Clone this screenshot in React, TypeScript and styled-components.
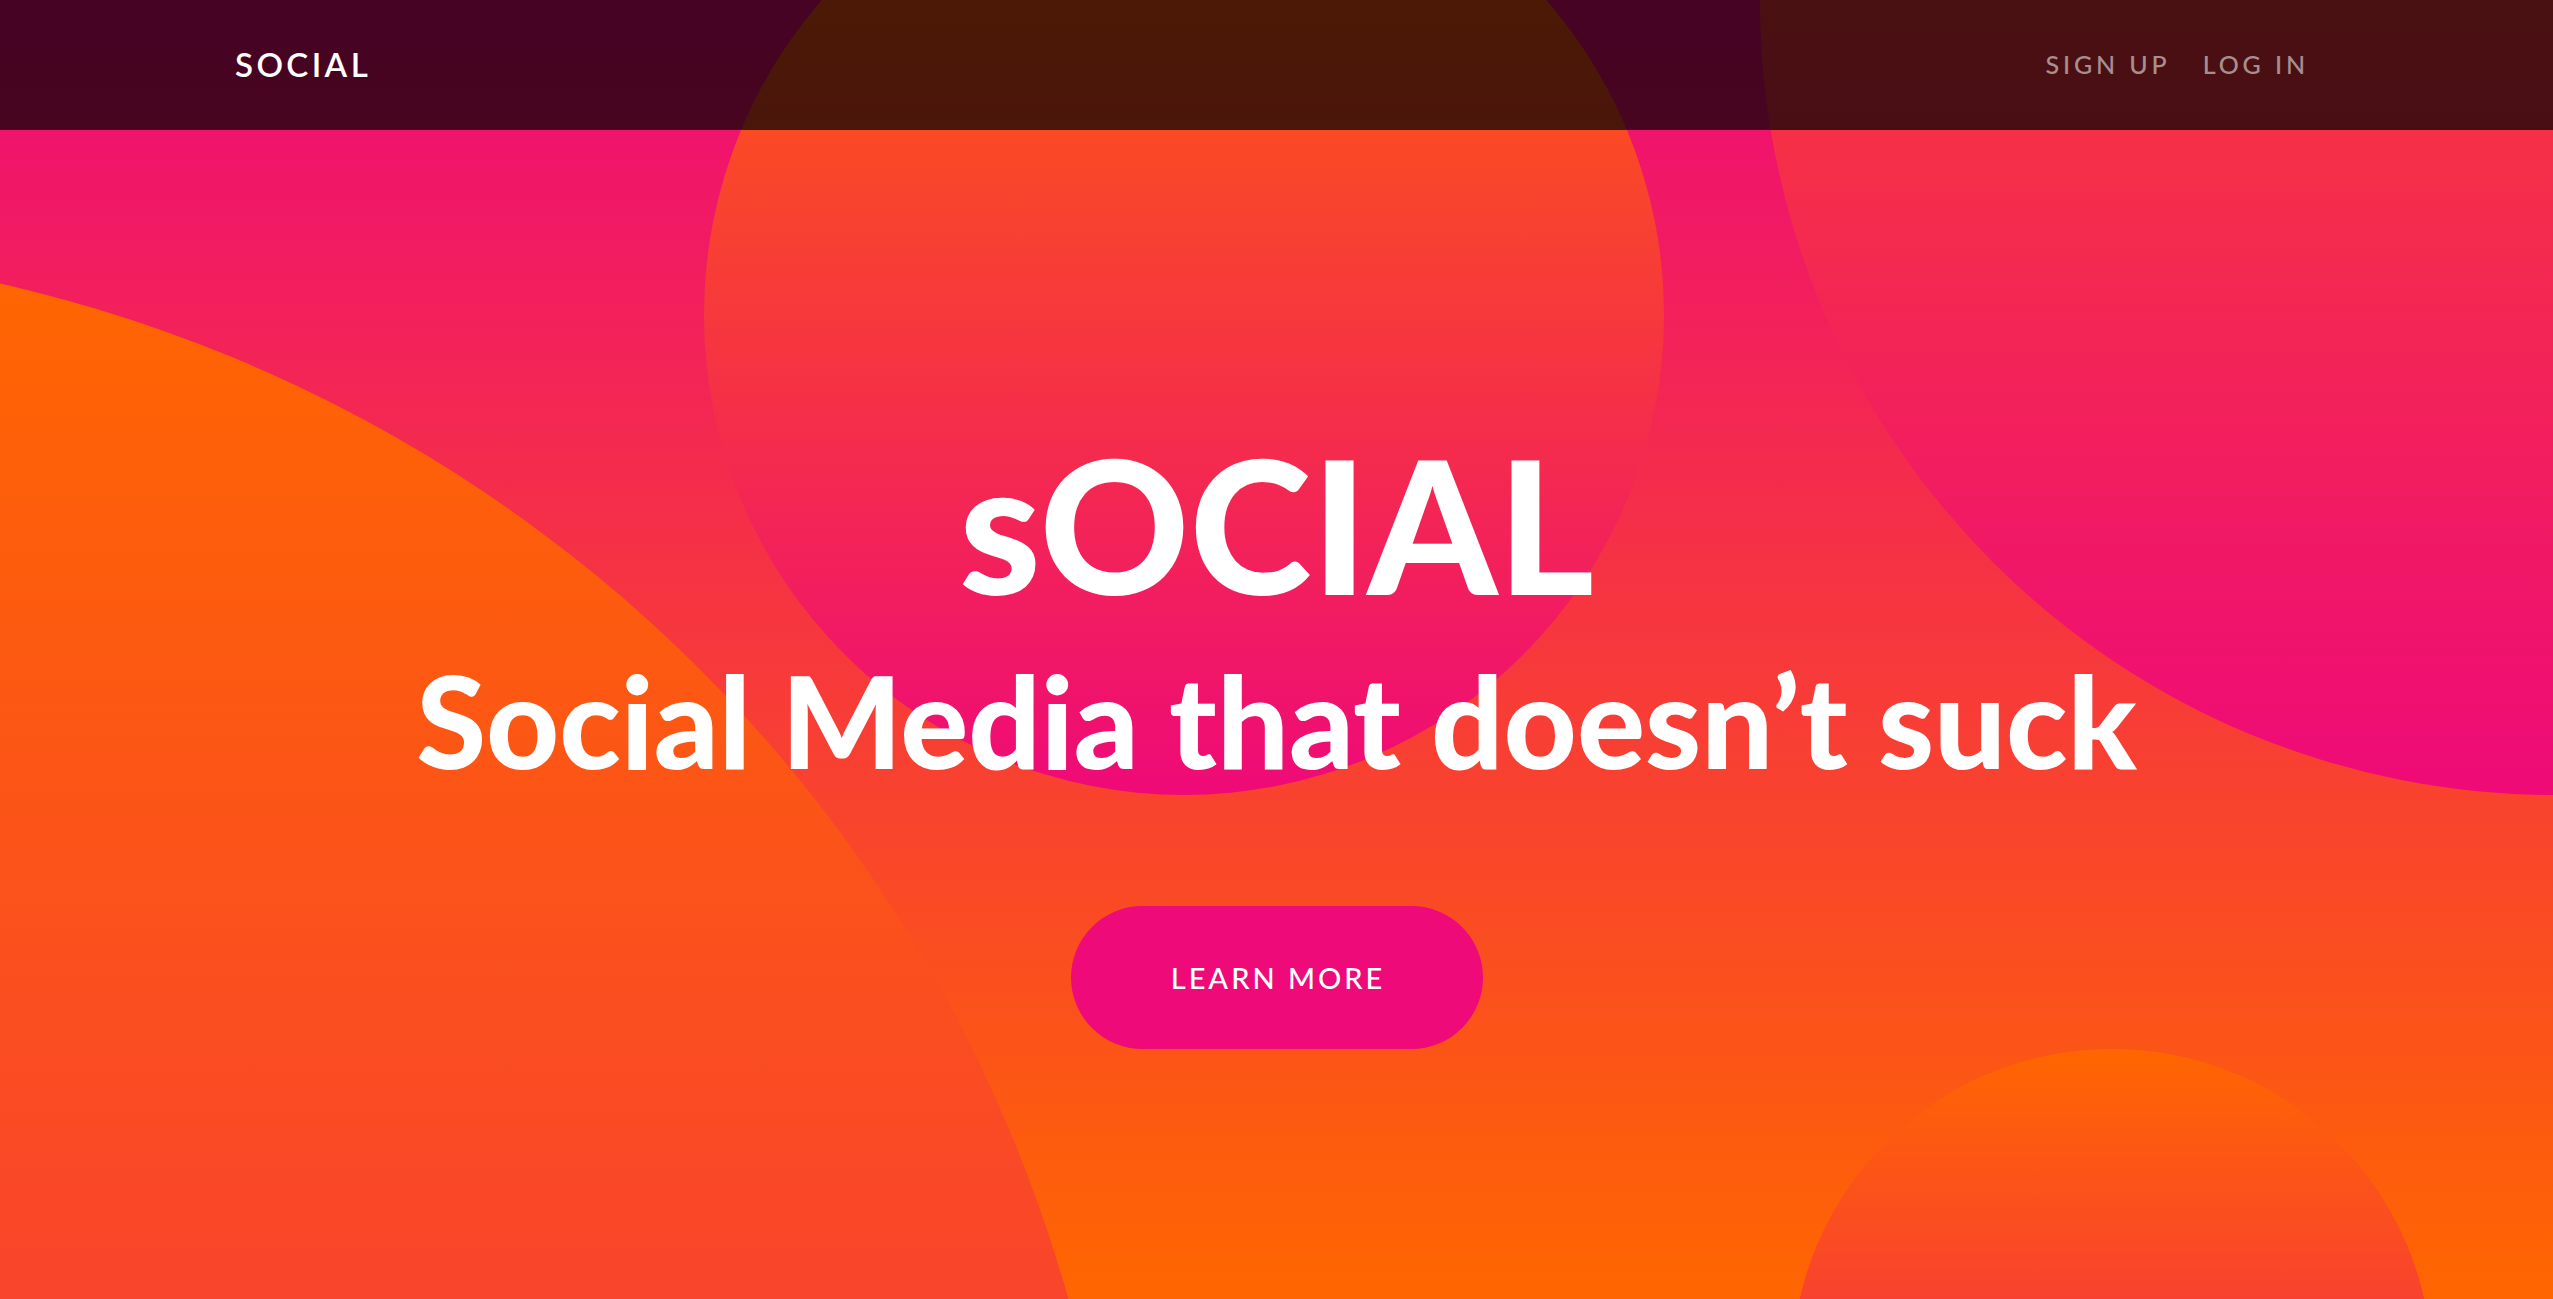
import React from "react";
import styled, { createGlobalStyle } from "styled-components";

const GlobalStyle = createGlobalStyle`
  html, body {
    margin: 0;
    padding: 0;
  }
  body {
    font-family: Lato, "Liberation Sans", sans-serif;
    -webkit-font-smoothing: antialiased;
  }
  *, *::before, *::after {
    box-sizing: border-box;
  }
`;

const Page = styled.div`
  position: relative;
  height: 100vh;
  min-height: 1299px;
  overflow: hidden;
  display: flex;
  flex-direction: column;
  background: linear-gradient(to bottom, #ee0a78 0%, #ff6600 100%);
`;

const Blob = styled.div<{ $cx: number; $cy: number; $r: number }>`
  position: absolute;
  left: ${(p) => p.$cx - p.$r}px;
  top: ${(p) => p.$cy - p.$r}px;
  width: ${(p) => p.$r * 2}px;
  height: ${(p) => p.$r * 2}px;
  border-radius: 50%;
  background: linear-gradient(to bottom, #ff6600 0%, #ee0a78 100%);
  pointer-events: none;
  z-index: 0;
`;

const NavBar = styled.header`
  position: relative;
  z-index: 2;
  flex: none;
  height: 130px;
  display: flex;
  align-items: center;
  justify-content: space-between;
  padding: 0 244px 2px 235px;
  background: rgba(0, 0, 0, 0.7);
`;

const Brand = styled.a`
  font-family: Lato, "Liberation Sans", sans-serif;
  font-weight: 600;
  font-size: 33px;
  line-height: 1;
  letter-spacing: 3.4px;
  color: #ffffff;
  text-decoration: none;
`;

const NavLinks = styled.nav`
  display: flex;
  align-items: center;
  gap: 32px;
`;

const NavLink = styled.a`
  font-family: Lato, "Liberation Sans", sans-serif;
  font-weight: 500;
  font-size: 25px;
  line-height: 1;
  letter-spacing: 3.9px;
  color: rgba(255, 255, 255, 0.55);
  text-decoration: none;
`;

const Hero = styled.main`
  position: relative;
  z-index: 1;
  display: flex;
  flex-direction: column;
  align-items: center;
  padding-top: 301px;
`;

const Title = styled.h1`
  margin: 0;
  font-family: Lato, "Liberation Sans", sans-serif;
  font-weight: 900;
  font-size: 185px;
  line-height: 1;
  color: #ffffff;
`;

const Tagline = styled.h2`
  margin: 41px 0 0;
  font-family: Lato, "Liberation Sans", sans-serif;
  font-weight: 900;
  font-size: 127px;
  line-height: 1;
  color: #ffffff;
  white-space: nowrap;
`;

const CallToAction = styled.a`
  margin-top: 122px;
  width: 412px;
  height: 143px;
  border-radius: 72px;
  display: flex;
  align-items: center;
  justify-content: center;
  padding-left: 3px;
  background: #ee0a78;
  font-family: Lato, "Liberation Sans", sans-serif;
  font-weight: 500;
  font-size: 29px;
  letter-spacing: 3px;
  color: #ffffff;
  text-decoration: none;
`;

const blobs = [
  { cx: -318, cy: 1688, r: 1440 },
  { cx: 1184, cy: 315, r: 480 },
  { cx: 2555, cy: 0, r: 795 },
  { cx: 2112, cy: 1369, r: 320 },
];

export default function App() {
  return (
    <>
      <GlobalStyle />
      <Page>
        {blobs.map((b, i) => (
          <Blob key={i} $cx={b.cx} $cy={b.cy} $r={b.r} />
        ))}
        <NavBar>
          <Brand href="#">SOCIAL</Brand>
          <NavLinks>
            <NavLink href="#">SIGN UP</NavLink>
            <NavLink href="#">LOG IN</NavLink>
          </NavLinks>
        </NavBar>
        <Hero>
          <Title>sOCIAL</Title>
          <Tagline>Social Media that doesn’t suck</Tagline>
          <CallToAction href="#">LEARN MORE</CallToAction>
        </Hero>
      </Page>
    </>
  );
}
